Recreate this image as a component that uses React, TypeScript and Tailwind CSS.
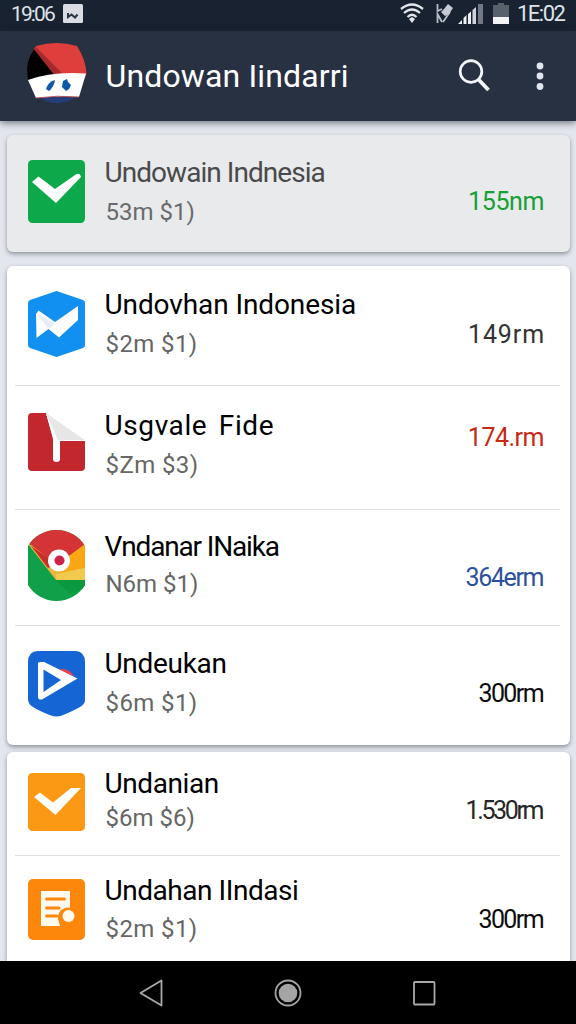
import type { ReactNode } from 'react';

type Item = {
  name: string;
  detail: string;
  amount: string;
  icon: ReactNode;
  // vertical rhythm differs a little from row to row
  row: string;
  iconPad: string;
  textPad: string;
  detailGap: string;
  amountPad: string;
  nameStyle: string;
  detailStyle: string;
  amountStyle: string;
};

const GreenCheck = () => (
  <svg width="57" height="63" viewBox="0 0 57 63">
    <rect width="57" height="63" rx="4.5" fill="#0da84a" />
    <path d="M4 22 L10.5 16.5 L27 29 L48.5 14 Q52 13 53 17 L28 43 Z" fill="#fff" />
  </svg>
);

const BlueHexagon = () => (
  <svg width="57" height="66" viewBox="0 0 57 66">
    <path d="M28.5 0 L55 9 Q57 10 57 12 V54 Q57 56 55 57 L28.5 66 L2 57 Q0 56 0 54 V12 Q0 10 2 9 Z" fill="#1190f2" />
    <path d="M10.5 19.5 L27 31 L50 15 V29 L31 46.5 L20.5 38 L8.5 47 L8 23 Z" fill="#fff" />
    <path d="M8.5 22 L20.5 38 L27 33 Z" fill="#e4edf8" />
  </svg>
);

const RedNote = () => (
  <svg width="57" height="58" viewBox="0 0 57 58">
    <path d="M4 0 H18 L26 28 H57 V54 Q57 58 53 58 H4 Q0 58 0 54 V4 Q0 0 4 0 Z" fill="#c1272d" />
    <path d="M18 0 L56.5 27 H32 V46 Q32 49 28.5 49 Q25 49 25 46 V26 Z" fill="#fff" />
    <path d="M18 0 L56.5 27 H30 Z" fill="#e6e6e7" />
  </svg>
);

const ColorWheel = () => (
  <svg width="57" height="71" viewBox="0 0 57 71">
    <clipPath id="wheel">
      <path d="M0 16 C6 6 17 0 28.5 0 S51 6 57 16 V55 C51 65 40 71 28.5 71 S6 65 0 55 Z" />
    </clipPath>
    <g clipPath="url(#wheel)">
      <rect width="57" height="71" fill="#10a04a" />
      <path d="M0 13 L3 15 L28 37 L57 14 V0 H0 Z" fill="#d43436" />
      <path d="M0 14 L28 50 H57 V36 L28 34 L3 15 Z" fill="#e7b63c" />
      <path d="M57 14 L30 34 V43 L57 38 Z" fill="#fba714" />
      <path d="M28 44 L57 38 V50 H28 Z" fill="#f1c94e" />
      <path d="M3 16 L20 38 L24 36 L25 31 Z" fill="#c62e2b" />
      <path d="M27 50 H57 V58 L43 64 Z" fill="#0b993f" />
    </g>
    <circle cx="31" cy="30.5" r="11" fill="#fff" />
    <circle cx="31.5" cy="30.5" r="5" fill="#cf2348" />
  </svg>
);

const BluePlay = () => (
  <svg width="57" height="66" viewBox="0 0 57 66">
    <path d="M9 0 H48 Q57 1 57 11 V49 Q57 53 52 56 Q45 60 34 64.5 Q28.5 66.5 23 64.5 Q11 60 5 56 Q0 53 0 48 V11 Q0 1 9 0 Z" fill="#1565d4" />
    <path d="M32 18 Q41 17 46 25 L34 21 Z" fill="#ee4149" />
    <path fillRule="evenodd" d="M10 12 Q10 10.5 16 11 L49.5 27.5 L14 48.5 Q10 49 10 46 Z M15.5 18.5 V41 L33 29 Z" fill="#fff" />
  </svg>
);

const OrangeCheck = () => (
  <svg width="57" height="58" viewBox="0 0 57 58">
    <rect width="57" height="58" rx="4.5" fill="#fb9814" />
    <path d="M6 24 L12 19.5 L25 29.5 L43 15 H53 L27.5 42 Z" fill="#fffdf8" />
  </svg>
);

const OrangeNote = () => (
  <svg width="57" height="61" viewBox="0 0 57 61">
    <rect width="57" height="61" rx="5" fill="#fd870b" />
    <path d="M13 12 H42 V29 L33 31 Q30 34 30 40 L32 47 H13 Z" fill="#fffaf0" />
    <path d="M18.500 20 H36.500 M18.500 29 H31 M18.500 37 H29" stroke="#fd870b" strokeWidth="3" strokeLinecap="round" />
    <circle cx="40" cy="37" r="8.5" fill="#fd870b" />
    <circle cx="40.5" cy="37" r="6" fill="#fffaf0" />
  </svg>
);

const FEATURED: Item[] = [
  {
    name: 'Undowain Indnesia', detail: '53m $1)', amount: '155nm', icon: <GreenCheck />,
    row: 'h-[117px]', iconPad: 'pt-[25px]', textPad: 'pt-5', detailGap: 'mt-1.5', amountPad: 'pt-[52px]',
    nameStyle: 'text-[#4a4a4c] tracking-[-0.95px]', detailStyle: 'text-[#6a6a6c]', amountStyle: 'text-[#16a035] tracking-[-0.4px]',
  },
];

const RECENT: Item[] = [
  {
    name: 'Undovhan Indonesia', detail: '$2m $1)', amount: '149rm', icon: <BlueHexagon />,
    row: 'h-[120px]', iconPad: 'pt-[25px]', textPad: 'pt-[21px]', detailGap: 'mt-1.5', amountPad: 'pt-[54px]',
    nameStyle: 'text-black tracking-[-0.1px]', detailStyle: 'text-[#666] tracking-[0.4px]', amountStyle: 'text-[#333] tracking-[0.9px] -mr-px',
  },
  {
    name: 'Usgvale Fide', detail: '$Zm $3)', amount: '174.rm', icon: <RedNote />,
    row: 'h-[124px]', iconPad: 'pt-[27px]', textPad: 'pt-[22px]', detailGap: 'mt-1.5', amountPad: 'pt-[37px]',
    nameStyle: 'text-black tracking-[0.6px] [word-spacing:4px]', detailStyle: 'text-[#666] tracking-[0.4px]', amountStyle: 'text-[#c62a17] tracking-[-0.5px]',
  },
  {
    name: 'Vndanar INaika', detail: 'N6m $1)', amount: '364erm', icon: <ColorWheel />,
    row: 'h-[116px]', iconPad: 'pt-5', textPad: 'pt-[19px]', detailGap: 'mt-1', amountPad: 'pt-[53px]',
    nameStyle: 'text-black tracking-[-1.15px]', detailStyle: 'text-[#666]', amountStyle: 'text-[#2c519c] tracking-[-1.4px] mr-px',
  },
  {
    name: 'Undeukan', detail: '$6m $1)', amount: '300rm', icon: <BluePlay />,
    row: 'h-[119px]', iconPad: 'pt-[25px]', textPad: 'pt-5', detailGap: 'mt-1.5', amountPad: 'pt-[53px]',
    nameStyle: 'text-black tracking-[-0.3px]', detailStyle: 'text-[#666] tracking-[0.4px]', amountStyle: 'text-[#0c0c0c] tracking-[-1.6px] mr-px',
  },
];

const OLDER: Item[] = [
  {
    name: 'Undanian', detail: '$6m $6)', amount: '1.530rm', icon: <OrangeCheck />,
    row: 'h-[104px]', iconPad: 'pt-[21px]', textPad: 'pt-[14px]', detailGap: 'mt-px', amountPad: 'pt-11',
    nameStyle: 'text-black tracking-[-0.4px]', detailStyle: 'text-[#666]', amountStyle: 'text-[#262626] tracking-[-2.4px] mr-0.5',
  },
  {
    name: 'Undahan IIndasi', detail: '$2m $1)', amount: '300rm', icon: <OrangeNote />,
    row: 'h-[105px]', iconPad: 'pt-[23px]', textPad: 'pt-[17px]', detailGap: 'mt-[5px]', amountPad: 'pt-[49px]',
    nameStyle: 'text-black tracking-[-0.45px]', detailStyle: 'text-[#666] tracking-[0.4px]', amountStyle: 'text-[#0c0c0c] tracking-[-1.6px] mr-px',
  },
];

function Row({ item, last }: { item: Item; last: boolean }) {
  return (
    <div className={`flex flex-col ${item.row}`}>
      <div className="flex flex-1 items-start pl-[21px] pr-[26px] whitespace-nowrap">
        <div className={`w-[57px] shrink-0 ${item.iconPad}`}>{item.icon}</div>
        <div className={`ml-[19.5px] flex-1 ${item.textPad}`}>
          <div className={`text-[28px] leading-9 ${item.nameStyle}`}>{item.name}</div>
          <div className={`text-[24px] leading-[30px] pl-px ${item.detailGap} ${item.detailStyle}`}>{item.detail}</div>
        </div>
        <div className={`text-[25px] leading-[30px] ${item.amountPad} ${item.amountStyle}`}>{item.amount}</div>
      </div>
      {!last && <div className="ml-2 mr-2.5 h-px bg-[#dfe0e4]" />}
    </div>
  );
}

function Card({ items, className }: { items: Item[]; className: string }) {
  return (
    <div className={`ml-[7px] mr-1.5 shadow-[0_2px_4px_rgba(60,65,75,0.5)] ${className}`}>
      {items.map((item, i) => (
        <Row key={i} item={item} last={i === items.length - 1} />
      ))}
    </div>
  );
}

function StatusBar() {
  return (
    <div className="h-[31px] bg-[#192230] flex items-center pl-[11px] pr-3 text-[#dfe3ea]">
      <span className="text-[21px] leading-[26px] tracking-[-1.9px] w-[43px] -mt-[3px]">19:06</span>
      <svg width="20" height="20" viewBox="0 0 20 20" className="ml-[9px] -mt-1.5">
        <rect y="1" width="20" height="19" rx="1.5" fill="#d9dce2" />
        <path d="M5 10 V14 L8.5 11.5 L12 14.5 L14.500 11.500" fill="none" stroke="#2b3442" strokeWidth="2" />
      </svg>
      <div className="flex-1" />
      <svg width="24" height="20" viewBox="0 0 24 20" className="-mt-1.5">
        <path d="M1 6 Q12 -3 23 6 M4 10 Q12 3 20 10 M7.5 14 Q12 9.5 16.5 14" fill="none" stroke="#e3e7ed" strokeWidth="2.3" />
        <path d="M9 16 L12 14 L15 16 L12 20 Z" fill="#e3e7ed" />
      </svg>
      <svg width="17" height="21" viewBox="0 0 17 21" className="ml-3 -mt-1">
        <path d="M1.5 1 V8 L6 6 M1.5 20 V11 L6 19 M7 19 L14 9" fill="none" stroke="#b5bcc7" strokeWidth="1.8" />
        <path d="M8 6 L12 1 L17 5 L13 11 L9 13 L5 9 Z" fill="#c5cad3" />
      </svg>
      <svg width="25" height="20" viewBox="0 0 25 20" className="ml-[5px] -mt-1">
        <path d="M0 20 L4 16 V20 Z M5.5 20 V14 L8.5 11 V20 Z M10 20 V10 L13 7.5 V20 Z" fill="#eef0f3" />
        <path d="M14.5 20 V6 L18 3 V20 Z" fill="#d0d4da" />
        <rect x="20" width="5" height="20" fill="#707985" />
      </svg>
      <svg width="16" height="21" viewBox="0 0 16 21" className="ml-2.5 -mt-1">
        <path d="M5 0 H11 V2 H16 V14 H0 V2 H5 Z" fill="#58616b" />
        <rect y="14" width="16" height="7" fill="#f3f4f5" />
      </svg>
      <span className="text-[22px] leading-[26px] ml-2 w-[47px] tracking-[-1.5px] -mt-[3px]">1E:02</span>
    </div>
  );
}

function AppBar() {
  return (
    <div className="h-[90px] bg-[#273142] flex items-center pl-[27px] pr-8 relative shadow-[0_2px_7px_rgba(40,45,55,0.6)]">
      <svg width="60" height="62" viewBox="0 0 60 62" className="-mt-1">
        <path d="M11 54 H49 Q30 66 11 54 Z" fill="#253d78" />
        <path d="M9 3 Q30 -3 50 3 Q59 17 59.5 31 L56 39 H4 L0 28 Q0 15 9 3 Z" fill="#df3f3c" />
        <path d="M7 6 L28 32 L1 37 L0 27 Q0 16 7 6 Z" fill="#000" />
        <path d="M7 6 L9 4 L35 30 L28 33 Z" fill="#a82b2c" />
        <path d="M1 37 Q25 28 59 30.5 L52 54 Q30 52.5 9 55 Z" fill="#fff" />
        <path d="M9 55 Q30 52 52 54" fill="none" stroke="#b8474e" strokeWidth="0.9" />
        <path d="M19 46 Q21 39 28 37 Q27 44 22 48 Z" fill="#0d57a8" />
        <path d="M36 38 L40 36 L41 39 L44 42 L42 46 L39 48 L35 44 Z" fill="#0d57a8" />
      </svg>
      <h1 className="ml-[18.5px] -mt-px flex-1 text-[32px] leading-10 tracking-[0.15px] text-white whitespace-nowrap">Undowan Iindarri</h1>
      <svg width="33" height="33" viewBox="0 0 33 33" fill="none" stroke="#f5f7fa" className="-mt-0.5">
        <circle cx="13" cy="12.5" r="10.8" strokeWidth="2.7" />
        <path d="M20.5 20.5 L30.5 31" strokeWidth="3.8" />
      </svg>
      <svg width="8" height="28" viewBox="0 0 8 28" fill="#e0e5ee" className="ml-[45px]">
        <circle cx="4" cy="4" r="3.4" />
        <circle cx="4" cy="14" r="3.4" />
        <circle cx="4" cy="24.5" r="3.4" />
      </svg>
    </div>
  );
}

function NavBar() {
  return (
    <div className="h-[63px] bg-black flex items-center pl-[139px]">
      <svg width="24" height="28" viewBox="0 0 24 28" fill="none" stroke="#aaa" strokeWidth="1.8" strokeLinejoin="round">
        <path d="M1.5 14 L22.5 1.5 V26.5 Z" />
      </svg>
      <svg width="28" height="28" viewBox="0 0 28 28" className="ml-[111px]">
        <circle cx="14" cy="14" r="12.5" fill="none" stroke="#a4a4a4" strokeWidth="1.8" />
        <circle cx="14" cy="14" r="9.3" fill="#a4a4a4" />
      </svg>
      <svg width="23" height="25" viewBox="0 0 23 25" className="ml-[111px] mt-0.5">
        <rect x="1" y="1" width="20.5" height="22.5" rx="1" fill="none" stroke="#aaa" strokeWidth="1.8" />
      </svg>
    </div>
  );
}

export default function App() {
  return (
    <div className="w-[576px] h-[1024px] overflow-hidden flex flex-col bg-[#e3e6ed] font-[Roboto,sans-serif]">
      <StatusBar />
      <AppBar />
      <div className="h-[840px] overflow-hidden flex flex-col pt-3.5">
        <Card items={FEATURED} className="bg-[#e9eaeb] rounded-md shrink-0" />
        <Card items={RECENT} className="bg-white rounded-md mt-3.5 shrink-0" />
        <Card items={OLDER} className="bg-white rounded-t-md mt-[7px] shrink-0" />
      </div>
      <NavBar />
    </div>
  );
}
